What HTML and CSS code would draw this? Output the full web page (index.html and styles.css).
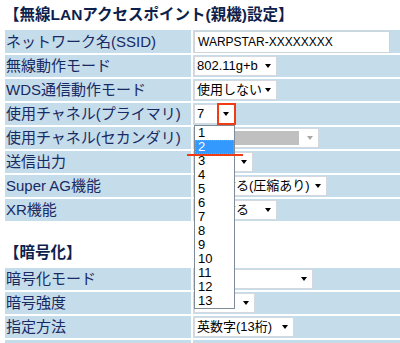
FILE: index.html
```html
<!DOCTYPE html>
<html lang="ja">
<head>
    <meta charset="UTF-8">
    <meta name="viewport" content="width=device-width, initial-scale=1.0">
    <title>無線LANアクセスポイント(親機)設定</title>
    <link rel="stylesheet" href="styles.css">
</head>
<body>
    <div class="heading">【無線LANアクセスポイント(親機)設定】</div>
    <table class="setting">
        <tr class="first">
            <td class="label">ネットワーク名(SSID)</td>
            <td class="field"><div class="textbox">WARPSTAR-XXXXXXXX</div></td>
        </tr>
        <tr>
            <td class="label">無線動作モード</td>
            <td class="field"><div class="sel w83"><span class="val">802.11g+b</span><span class="arrow"></span></div></td>
        </tr>
        <tr>
            <td class="label">WDS通信動作モード</td>
            <td class="field"><div class="sel w83"><span class="val">使用しない</span><span class="arrow"></span></div></td>
        </tr>
        <tr>
            <td class="label">使用チャネル(プライマリ)</td>
            <td class="field">
                <div class="sel w41 open">
                    <span class="val">7</span><span class="arrow"></span>
                    <ul class="options">
                        <li>1</li>
                        <li class="hover">2</li>
                        <li>3</li>
                        <li>4</li>
                        <li>5</li>
                        <li>6</li>
                        <li>7</li>
                        <li>8</li>
                        <li>9</li>
                        <li>10</li>
                        <li>11</li>
                        <li>12</li>
                        <li>13</li>
                    </ul>
                    <!-- 注目の印 -->
                    <div class="mark-box"></div>
                    <div class="mark-line"></div>
                </div>
            </td>
        </tr>
        <tr>
            <td class="label">使用チャネル(セカンダリ)</td>
            <td class="field"><div class="sel w125 disabled"><span class="val"></span><span class="arrow"></span></div></td>
        </tr>
        <tr>
            <td class="label">送信出力</td>
            <td class="field"><div class="sel w59"><span class="val">100%</span><span class="arrow"></span></div></td>
        </tr>
        <tr>
            <td class="label">Super AG機能</td>
            <td class="field"><div class="sel w133"><span class="val">使用する(圧縮あり)</span><span class="arrow"></span></div></td>
        </tr>
        <tr>
            <td class="label">XR機能</td>
            <td class="field"><div class="sel w83"><span class="val">使用する</span><span class="arrow"></span></div></td>
        </tr>
    </table>

    <div class="heading second">【暗号化】</div>
    <table class="setting">
        <tr>
            <td class="label">暗号化モード</td>
            <td class="field"><div class="sel w119"><span class="val">WEP</span><span class="arrow"></span></div></td>
        </tr>
        <tr>
            <td class="label">暗号強度</td>
            <td class="field"><div class="sel w61"><span class="val">128bit</span><span class="arrow"></span></div></td>
        </tr>
        <tr>
            <td class="label">指定方法</td>
            <td class="field"><div class="sel w100"><span class="val">英数字(13桁)</span><span class="arrow"></span></div></td>
        </tr>
        <tr>
            <td class="label">接続先の暗号キー番号</td>
            <td class="field"></td>
        </tr>
    </table>
</body>
</html>
```

FILE: styles.css
```css
html, body {
    margin: 0;
    overflow: hidden;
}
body {
    padding: 0 0 0 3px;
    background-color: #fff;
    font-family: "Liberation Sans", "Noto Sans CJK JP", sans-serif;
}
.heading {
    font-size: 15.5px;
    font-weight: bold;
    line-height: 20px;
    height: 20px;
    padding: 5px 0 3px 1px;
    color: #0f1f4c;
    white-space: nowrap;
}
.heading.second {
    margin-top: 15px;
}
.setting {
    width: 440px;
    border-spacing: 2px;
    table-layout: fixed;
}
.setting td {
    height: 22px;
    padding: 0 1px;
    background-color: #c5dceb;
    vertical-align: middle;
}
.setting tr.first td {
    height: 23px;
}
.label {
    width: 184px;
    font-size: 15px;
    line-height: 20px;
    color: #182a64;
    white-space: nowrap;
    overflow: hidden;
}
.field {
    font-size: 13px;
}
.textbox {
    box-sizing: border-box;
    width: 196px;
    height: 22px;
    padding: 0 3px;
    line-height: 20px;
    font-size: 12px;
    background-color: #fff;
    border: 1px solid #cdd4da;
    color: #000;
}
.sel {
    box-sizing: border-box;
    display: flex;
    align-items: center;
    justify-content: space-between;
    height: 20px;
    padding: 0 5px 0 2px;
    background-color: #fff;
    border: 1px solid #d3d9de;
    color: #000;
    line-height: 18px;
    white-space: nowrap;
}
.sel .val {
    overflow: hidden;
}
.arrow {
    flex: none;
    width: 0;
    height: 0;
    border-left: 3.5px solid transparent;
    border-right: 3.5px solid transparent;
    border-top: 4px solid #000;
    margin-left: 4px;
}
.w41 { width: 41px; }
.w59 { width: 59px; }
.w61 { width: 61px; }
.w83 { width: 83px; }
.w100 { width: 100px; }
.w119 { width: 119px; }
.w125 { width: 125px; }
.w133 { width: 133px; }

.sel.disabled {
    padding-left: 2px;
}
.sel.disabled .val {
    align-self: stretch;
    flex: 1;
    margin: 2px 0;
    background-color: #c0c0c0;
}
.sel.disabled .arrow {
    border-top-color: #a8a8a8;
    margin-left: 8px;
}

.sel.open {
    position: relative;
    z-index: 5;
}
.options {
    position: absolute;
    left: -1px;
    top: 20px;
    width: 41px;
    box-sizing: border-box;
    margin: 0;
    padding: 0;
    list-style: none;
    background-color: #fff;
    border: 1px solid #7f8b96;
    font-size: 13px;
    line-height: 14px;
}
.options li {
    height: 14px;
    padding-left: 3px;
}
.options li.hover {
    background-color: #3399ff;
    color: #fff;
    outline: 1px dotted #ff8c00;
    outline-offset: -1px;
}
.mark-box {
    position: absolute;
    left: 22px;
    top: -2px;
    width: 19px;
    height: 22px;
    box-sizing: border-box;
    border: 2px solid #f03c14;
}
.mark-line {
    position: absolute;
    left: -8px;
    top: 49px;
    width: 56px;
    height: 2px;
    background-color: #f03c14;
}
```
